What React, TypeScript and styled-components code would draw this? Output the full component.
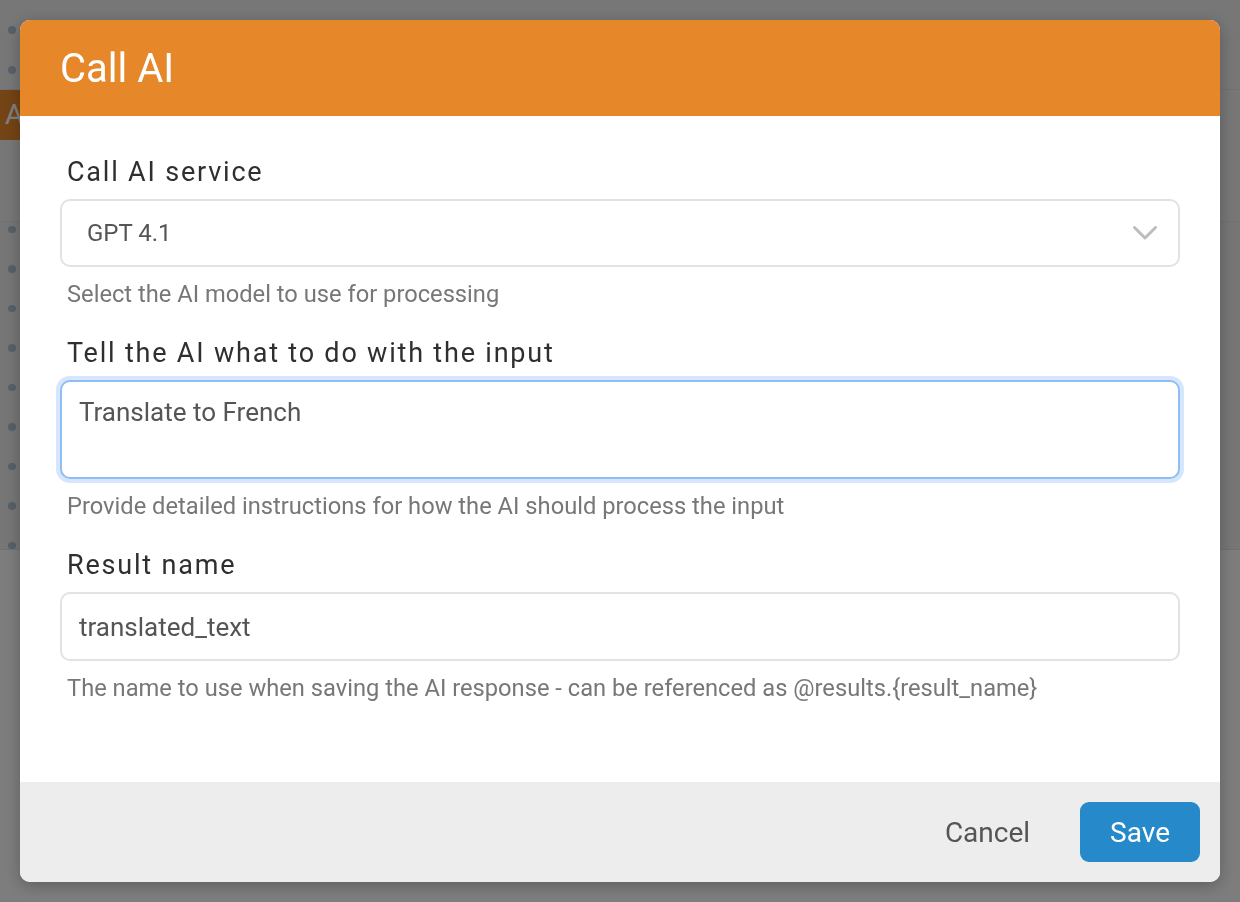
import React, { useState } from "react";
import styled, { createGlobalStyle } from "styled-components";

const GlobalStyle = createGlobalStyle`
  html, body {
    margin: 0;
    padding: 0;
    font-family: Roboto, "Liberation Sans", Arial, sans-serif;
  }
  * {
    box-sizing: border-box;
  }
`;

// page behind the dialog, only its left/right edges show
const Page = styled.div`
  width: 1240px;
  height: 902px;
  background: #fafafa;
  display: flex;
  flex-direction: column;
  overflow: hidden;
`;

const DotList = styled.ul<{ $bg: string; $height: number; $top: number }>`
  list-style: none;
  margin: 0;
  padding: ${({ $top }) => $top}px 0 0 0;
  height: ${({ $height }) => $height}px;
  background: ${({ $bg }) => $bg};
  display: flex;
  flex-direction: column;
  gap: 32px;
  border-bottom: 1px solid #e2e2e2;
`;

const Dot = styled.li`
  width: 8px;
  height: 8px;
  margin-left: 8px;
  border-radius: 50%;
  background: #b0c0d0;
`;

const TabRow = styled.div`
  height: 50px;
  background: #eeeeee;
  display: flex;
`;

const Tab = styled.div`
  background: #e6882a;
  color: #ffffff;
  font-size: 28px;
  line-height: 50px;
  padding: 0 16px 0 5px;
`;

const Spacer = styled.div`
  height: 82px;
  background: #eeeeee;
  border-bottom: 1px solid #e0e0e0;
`;

const Overlay = styled.div`
  position: fixed;
  inset: 0;
  background: rgba(0, 0, 0, 0.5);
  padding: 20px;
  display: flex;
`;

const Dialog = styled.div`
  flex: 1;
  display: flex;
  flex-direction: column;
  border-radius: 10px;
  overflow: hidden;
  background: #ffffff;
  box-shadow: 0 4px 16px rgba(0, 0, 0, 0.25);
`;

const Header = styled.div`
  height: 96px;
  background: #e6882a;
  display: flex;
  align-items: center;
  padding: 0 40px;
`;

const Title = styled.h2`
  margin: 0;
  color: #ffffff;
  font-size: 40px;
  font-weight: 400;
`;

const Body = styled.div`
  flex: 1;
  padding: 40px 40px 0 40px;
  display: flex;
  flex-direction: column;
  gap: 28px;
`;

const Field = styled.div`
  display: flex;
  flex-direction: column;
`;

const Label = styled.label`
  font-size: 27px;
  line-height: 32px;
  letter-spacing: 1.8px;
  color: #2f2f2f;
  padding-left: 7px;
  margin-bottom: 11px;
`;

const Help = styled.div`
  font-size: 23.7px;
  line-height: 30px;
  color: #777777;
  padding-left: 7px;
  margin-top: 12px;
`;

const SelectBox = styled.div`
  height: 68px;
  border: 2px solid #e2e2e2;
  border-radius: 10px;
  display: flex;
  align-items: center;
  justify-content: space-between;
  padding: 0 20px 0 25px;
  font-size: 24px;
  color: #555555;
`;

const TextArea = styled.textarea`
  height: 99px;
  border: 2px solid #8fbef5;
  border-radius: 10px;
  box-shadow: 0 0 0 4px #d6e6fd;
  padding: 12px 17px;
  font-family: inherit;
  font-size: 26px;
  line-height: 36px;
  color: #555555;
  resize: none;
  outline: none;
`;

const TextInput = styled.input`
  height: 69px;
  border: 2px solid #e2e2e2;
  border-radius: 10px;
  padding: 0 17px;
  font-family: inherit;
  font-size: 26px;
  color: #555555;
  outline: none;
`;

const Footer = styled.div`
  height: 100px;
  background: #ededed;
  display: flex;
  justify-content: flex-end;
  align-items: center;
  gap: 20px;
  padding: 0 20px;
`;

const Button = styled.button<{ $primary?: boolean }>`
  height: 60px;
  padding: 0 30px;
  border: none;
  border-radius: 9px;
  font-family: inherit;
  font-size: 28px;
  cursor: pointer;
  background: ${({ $primary }) => ($primary ? "#2589ca" : "transparent")};
  color: ${({ $primary }) => ($primary ? "#ffffff" : "#555555")};
`;

const Chevron = () => (
  <svg width="26" height="16" viewBox="0 0 26 16">
    <polyline
      points="2.5,2.5 13,13 23.5,2.5"
      fill="none"
      stroke="#bdbdbd"
      strokeWidth="3"
      strokeLinecap="round"
      strokeLinejoin="round"
    />
  </svg>
);

export default function App() {
  const [prompt, setPrompt] = useState("Translate to French");
  const [resultName, setResultName] = useState("translated_text");

  return (
    <>
      <GlobalStyle />
      <Page>
        <DotList $bg="#eeeeee" $height={90} $top={26}>
          <Dot />
          <Dot />
        </DotList>
        <TabRow>
          <Tab>Actions</Tab>
        </TabRow>
        <Spacer />
        <DotList $bg="#ececec" $height={328} $top={4}>
          {Array.from({ length: 9 }).map((_, i) => (
            <Dot key={i} />
          ))}
        </DotList>
      </Page>
      <Overlay>
        <Dialog>
          <Header>
            <Title>Call AI</Title>
          </Header>
          <Body>
            <Field>
              <Label>Call AI service</Label>
              <SelectBox>
                <span>GPT 4.1</span>
                <Chevron />
              </SelectBox>
              <Help>Select the AI model to use for processing</Help>
            </Field>
            <Field>
              <Label>Tell the AI what to do with the input</Label>
              <TextArea value={prompt} onChange={(e) => setPrompt(e.target.value)} />
              <Help>Provide detailed instructions for how the AI should process the input</Help>
            </Field>
            <Field>
              <Label>Result name</Label>
              <TextInput value={resultName} onChange={(e) => setResultName(e.target.value)} />
              <Help>
                The name to use when saving the AI response - can be referenced as
                @results.{"{result_name}"}
              </Help>
            </Field>
          </Body>
          <Footer>
            <Button>Cancel</Button>
            <Button $primary>Save</Button>
          </Footer>
        </Dialog>
      </Overlay>
    </>
  );
}
